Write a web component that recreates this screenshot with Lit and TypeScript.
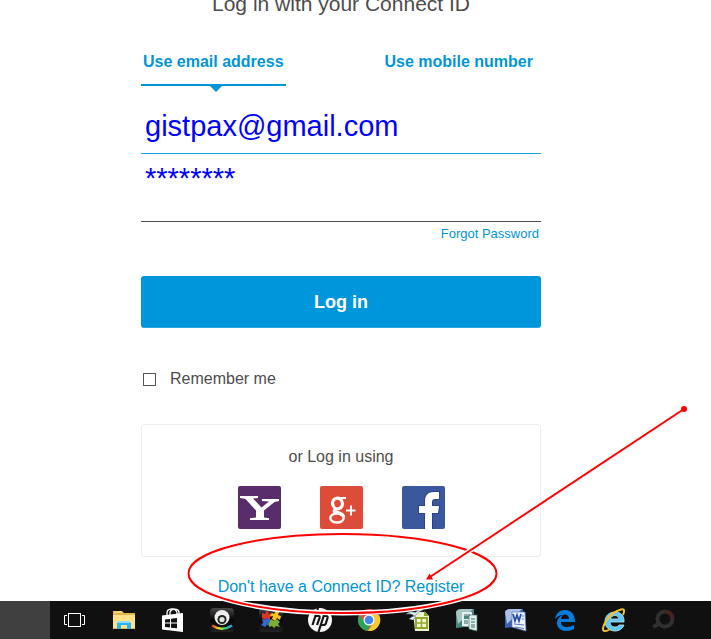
import { LitElement, html, css, svg } from "lit";
import { customElement } from "lit/decorators.js";

const yahoo = svg`
  <rect width="43" height="43" rx="2" fill="#592c6b"/>
  <path fill="#fff" d="M2 10H20V12L15 12.500L23.500 21.500L31 15.500L24 15V13H41V15L36.500 16L26 24.500V31.500L31 32.300V34H12V32.300L18 31.500V24.500L7.500 13L2 12Z"/>`;

const google = svg`
  <rect width="43" height="43" rx="2" fill="#dd4b39"/>
  <g fill="none" stroke="#fff">
    <ellipse cx="17.500" cy="17.500" rx="4.900" ry="5.400" stroke-width="3.200" transform="rotate(-12 17.500 17.500)"/>
    <path stroke-width="2.200" d="M18 12H26M16 23C12 25 13.500 26.500 18 27.500"/>
    <ellipse cx="17" cy="32" rx="6.700" ry="4.500" stroke-width="2.400"/>
    <path stroke-width="3.200" d="M14.500 25C16 27 23 26.500 23.700 31"/>
    <path stroke-width="2" d="M26 24.500H35.500M31 19.500V29.500"/>
  </g>`;

const facebook = svg`
  <rect width="43" height="43" rx="2" fill="#3b579d"/>
  <path d="M23 43V27H17V20H23V15C23 9 26.500 6 31.500 6H37V13H33C31 13 30 14 30 16V20H37L36 27H30V43Z" fill="#fff" stroke="#233f80" stroke-width="1.500" paint-order="stroke"/>`;

const taskIcons = [
  {
    name: "Task view",
    art: svg`<g fill="none" stroke="#fff"><rect x="6.500" y="6.500" width="12" height="13"/><path d="M5 8.500H2.500V17.500H5M20 8.500H22.500V17.500H20"/></g>`,
  },
  {
    name: "File Explorer",
    art: svg`<path d="M2 4H11L13 6H24V22H2Z" fill="#e6b64c"/><path d="M3 5H11" stroke="#fff0a8"/><path d="M2 8H24V21H2Z" fill="#ffe28a"/><path d="M6 22V16L8 14H18L20 16V22H16V18H10V22Z" fill="#29b6ee"/><path d="M8 14H18L20 16H6Z" fill="#8bdcf8"/>`,
  },
  {
    name: "Store",
    art: svg`<path d="M2 8.500L23 6V25L2 22.500Z" fill="#fff"/><path d="M7 9V6C7 1 16 0 17 6V8M10 9V5C11 1.500 18 1 19 5V8" fill="none" stroke="#fff" stroke-width="1.300"/><path fill="#101010" d="M5 12.500L10 12V15.500H5ZM11 11.800L17 11V15.500H11ZM5 16.500H10V20.500L5 20ZM11 16.500H17V21.300L11 20.700Z"/>`,
  },
  {
    name: "Webcam",
    art: svg`<rect x="1" y="1" width="24" height="24" rx="4" fill="url(#gloss)"/><circle cx="13" cy="10.500" r="7.500" fill="#eee"/><circle cx="13" cy="12.500" r="4.500" fill="#222"/><circle cx="13" cy="12.500" r="2.600" fill="#dde8dd"/><path d="M3 18.500Q13 25 23 18.500" fill="none" stroke="url(#rainbow)" stroke-width="2.500"/>`,
  },
  {
    name: "Puzzle",
    art: svg`<rect x="1" y="1" width="24" height="24" rx="4" fill="url(#gloss)"/><path fill="#e13428" d="M4 6L7 7L8 4L11 5L10 7L14 6L15 9L12 10L12 13L9 11L7 13L4 11Z"/><path fill="#f4c51e" d="M14 6L16 7L18 4L21 5L20 8L23 9L22 13L19 11L17 14L14 12L15 9L12 9Z"/><path fill="#3468cd" d="M4 12L7 13L9 11L13 13L11 16L12 19L9 18L7 20L3 18L5 16Z"/><path fill="#7cac31" d="M13 12L16 14L19 12L22 15L20 17L22 20L18 19L16 21L14 19L11 20L11 16Z"/>`,
  },
  {
    name: "HP",
    art: svg`<circle cx="13" cy="13" r="12" fill="#f6f6f6"/><g fill="none" stroke="#151515" stroke-width="2.200"><path d="M11 1L5.500 18M8 9H11.500Q13 9 12.500 11L10 18"/><path d="M17 8L11.500 25M17 9H19.500Q21 9 20.500 11L19 16Q18.500 18 16.500 18H14"/></g>`,
  },
  {
    name: "Chrome",
    art: svg`<circle cx="13" cy="13" r="11" fill="#e94b3c"/><path d="M3.500 7.500L9 16L14 18L12 24A11 11 0 0 1 3.500 7.500Z" fill="#28a456"/><path d="M13 8H23A11 11 0 0 1 12 24L17 16Z" fill="#f8cb30"/><circle cx="13" cy="13" r="5.500" fill="#fff"/><circle cx="13" cy="13" r="4.300" fill="#4285ed"/>`,
  },
  {
    name: "Spreadsheet",
    art: svg`<path d="M8 5H20L24 9V24H10Z" fill="#edf1cf"/><path d="M19 4L24 9H19Z" fill="#89a729"/><path d="M11 11H22V21H11Z" fill="#f3f8d9" stroke="#93ab24" stroke-width="2"/><path d="M16.500 11V21M11 16H22" stroke="#93ab24" stroke-width="1.500"/><path d="M1 7Q6 3 10 6Q14 1 18 3Q12 5 10 9Q6 6 1 7M4 12Q8 8 11 10L8 13" fill="#e2edf2" stroke="#60747d" stroke-width=".6"/>`,
  },
  {
    name: "Publisher",
    art: svg`<path d="M2 5Q3 2 8 2H20V19L2 21Z" fill="#4d8580"/><path d="M2 5Q3 2 8 2H19L4 17Z" fill="#a8c6c2"/><path d="M8 5H18V20L8 19Z" fill="#e4f1ef"/><path d="M15 8H23V24L15 22Z" fill="#e4f1ef" stroke="#47716d" stroke-width=".7"/><path d="M10 8H16M10 14H14M10 16H14M17 12H21M17 15H21M17 18H21M17 20H21" stroke="#376763"/><path d="M10 9H15V12H10Z" fill="#4b8580"/>`,
  },
  {
    name: "Word",
    art: svg`<path d="M2 5Q3 2 8 2H20V19L2 21Z" fill="#385fae"/><path d="M2 5Q3 2 8 2H19L4 17Z" fill="#adc0e4"/><path d="M9 5H22L23 24L9 20Z" fill="#eef3fc" stroke="#617ebb" stroke-width=".7"/><path d="M10 7L12 14L14 8L16 14L18 7" fill="none" stroke="#294f9f" stroke-width="1.800"/><path d="M19 9H21M19 12H21M11 17L21 18M12 20L21 21.500" stroke="#5475ba"/>`,
  },
  {
    name: "Edge",
    art: svg`<path fill="#087cdb" d="M3 12C4 6 8 3 13 3C20 3 23 8 23 15H9C9 19 12 20 15 20C18 20 20 19 22 18V22C20 23 17 24 14 24C8 24 5 20 5 16C5 12 8 9 11 8C7 8 5 10 3 12ZM9 12H17C17 9 15 7.500 13 7.500C11 7.500 9.500 9 9 12Z"/>`,
  },
  {
    name: "Internet Explorer",
    art: svg`<path fill="#5fc8f4" stroke="#b5eafb" stroke-width=".8" d="M23 15H9C9 18 11 20 14 20C16 20 17.500 19 18 18H23C21.500 22 18 24 14 24C8 24 4 20 4 14.500C4 9 8 5 14 5C20 5 23.500 9 23 15ZM9.500 12H18C17.500 10 16 8.500 14 8.500C11.500 8.500 10 10 9.500 12Z"/><path d="M22 8Q25 1 20 2.500Q11 5 5 14Q-.500 24 4 24Q6 24 9 22" fill="none" stroke="#f5c22b" stroke-width="2"/>`,
  },
  {
    name: "Viewer",
    art: svg`<circle cx="15" cy="12" r="7.500" fill="none" stroke="#303030" stroke-width="4"/><path d="M15 4.500A7.500 7.500 0 0 1 22.500 11" fill="none" stroke="#4a211c" stroke-width="4"/><path d="M9 17L3 20" stroke="#303030" stroke-width="4"/>`,
  },
];

@customElement("app-root")
export class AppRoot extends LitElement {
  static styles = css`
    * { box-sizing: border-box; }
    :host {
      display: flex;
      flex-direction: column;
      position: relative;
      min-height: 100vh;
      overflow: hidden;
      background: #fff;
      color: #4d4d4d;
      font: 16px/20px "Liberation Sans", Arial, sans-serif;
    }
    a { color: #0096d6; text-decoration: none; }
    svg { display: block; }
    .page {
      flex: 1;
      display: flex;
      flex-direction: column;
      align-items: center;
      padding-right: 29px;
    }
    .form { width: 100%; max-width: 400px; display: flex; flex-direction: column; }
    .title { margin: -8px 0 36px; font-size: 21px; line-height: 24px; font-weight: 400; text-align: center; }
    .tabs { display: flex; justify-content: space-between; padding-right: 6px; margin-bottom: 24px; }
    .tab {
      position: relative;
      padding: 0 2px 12px;
      border: 0;
      border-bottom: 2px solid transparent;
      background: none;
      color: #0096d6;
      font: bold 16px/20px "Liberation Sans", Arial, sans-serif;
    }
    .tab.active { border-color: #0096d6; }
    .tab.active::after {
      content: "";
      position: absolute;
      top: 100%;
      left: 50%;
      margin-top: 2px;
      margin-left: -3px;
      border: 6px solid transparent;
      border-top-color: #0096d6;
      border-bottom: 0;
    }
    .field {
      width: 100%;
      height: 44px;
      padding: 0 4px 10px;
      border: 0;
      border-bottom: 1px solid #14a5e4;
      border-radius: 0;
      outline: 0;
      background: none;
      color: #00f;
      font: 29px/33px "Liberation Sans", Arial, sans-serif;
    }
    .field.secret { height: 60px; margin-top: 8px; padding-bottom: 26px; border-color: #4d4d4d; }
    .forgot { align-self: flex-end; margin: 4px 2px 34px 0; font-size: 13px; line-height: 16px; }
    .login {
      height: 52px;
      padding: 0;
      border: 0;
      border-bottom: 1px solid #2ba8df;
      border-radius: 3px;
      background: #0096dc;
      color: #fff;
      font: bold 18px/20px "Liberation Sans", Arial, sans-serif;
    }
    .remember { display: flex; align-items: center; gap: 14px; margin: 41px 0 35px 2px; }
    .tick {
      appearance: none;
      width: 13px;
      height: 13px;
      margin: 0;
      border: 1px solid #555;
      background: #fff;
    }
    .tick:checked { background: #0096d6; }
    .social {
      display: flex;
      flex-direction: column;
      align-items: center;
      gap: 19px;
      padding: 22px 0 27px;
      border: 1px solid #eee;
      border-radius: 3px;
    }
    .providers { display: flex; gap: 39px; }
    .register { margin: 20px auto 4px; }
    .taskbar { display: flex; align-items: center; height: 38px; background: #101010; }
    .start { width: 50px; height: 100%; padding: 0; border: 0; background: #404040; }
    .task { display: grid; place-items: center; width: 49px; height: 100%; padding: 0; border: 0; background: none; }
    .markup { position: absolute; left: 0; bottom: 0; pointer-events: none; }
  `;

  render() {
    return html`
      <main class="page">
        <form class="form" @submit=${(e: Event) => e.preventDefault()}>
          <h1 class="title">Log in with your Connect ID</h1>
          <div class="tabs" role="tablist">
            <button class="tab active" type="button" role="tab" aria-selected="true">Use email address</button>
            <button class="tab" type="button" role="tab" aria-selected="false">Use mobile number</button>
          </div>
          <input class="field" type="text" aria-label="Email address" value="gistpax@gmail.com" spellcheck="false" />
          <input class="field secret" type="text" aria-label="Password" value="********" autocomplete="off" />
          <a class="forgot" href="#">Forgot Password</a>
          <button class="login" type="submit">Log in</button>
          <label class="remember"><input class="tick" type="checkbox" />Remember me</label>
          <section class="social">
            <span>or Log in using</span>
            <div class="providers">
              <a href="#" aria-label="Yahoo"><svg width="43" height="43">${yahoo}</svg></a>
              <a href="#" aria-label="Google Plus"><svg width="43" height="43">${google}</svg></a>
              <a href="#" aria-label="Facebook"><svg width="43" height="43">${facebook}</svg></a>
            </div>
          </section>
          <a class="register" href="#">Don't have a Connect ID? Register</a>
        </form>
      </main>
      <nav class="taskbar" aria-label="Taskbar">
        <button class="start" aria-label="Start"></button>
        ${taskIcons.map(
          (t) => html`<button class="task" aria-label=${t.name}>
            <svg width="26" height="26" viewBox="0 0 26 26">
              <defs>
                <linearGradient id="gloss" x2="0" y2="1"><stop stop-color="#484848"/><stop offset=".5" stop-color="#050505"/><stop offset="1" stop-color="#222"/></linearGradient>
                <linearGradient id="rainbow"><stop stop-color="#e33"/><stop offset=".35" stop-color="#ed3"/><stop offset=".65" stop-color="#3c6"/><stop offset="1" stop-color="#39f"/></linearGradient>
              </defs>
              ${t.art}
            </svg>
          </button>`
        )}
      </nav>
      <svg class="markup" width="711" height="240" viewBox="0 399 711 240" aria-hidden="true">
        <g fill="none">
          <ellipse cx="342.500" cy="573.500" rx="154" ry="39.500" stroke="#fff" stroke-width="5"/>
          <ellipse cx="342.500" cy="573.500" rx="154" ry="39.500" stroke="#f00" stroke-width="2"/>
          <path d="M684 409L430 577" stroke="#fff" stroke-width="5"/>
          <path d="M684 409L430 577" stroke="#f00" stroke-width="2"/>
        </g>
        <circle cx="684" cy="409" r="3" fill="#f00"/>
        <path d="M426 579.500L429.500 573.500L433 579.500Z" fill="#f00"/>
      </svg>
    `;
  }
}
